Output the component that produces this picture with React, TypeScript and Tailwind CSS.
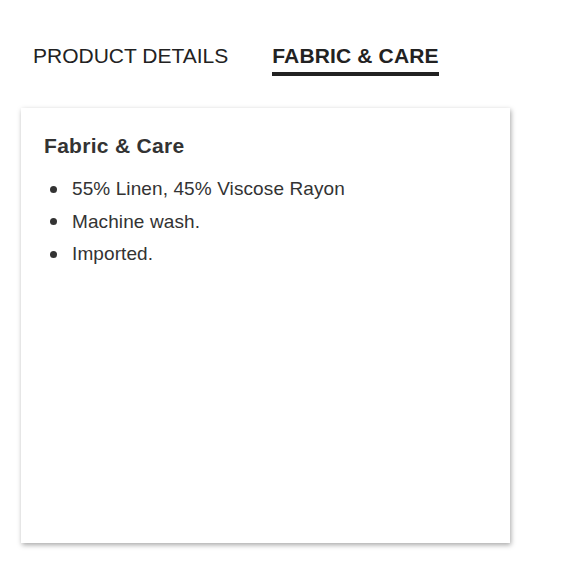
import { useState } from 'react';

type Tab = 'details' | 'care';

const careItems = ['55% Linen, 45% Viscose Rayon', 'Machine wash.', 'Imported.'];

export default function App() {
  const [tab, setTab] = useState<Tab>('care');

  return (
    <div className="min-h-[580px] w-[580px] bg-white pt-[44px] px-[21px] font-['Liberation_Sans',Arial,sans-serif] text-[#222]">
      <div className="flex gap-[44px] pl-[12px]">
        <button
          type="button"
          onClick={() => setTab('details')}
          className={`pb-[4px] border-b-4 text-[21px] leading-[24px] ${
            tab === 'details' ? 'font-bold border-[#222]' : 'font-normal border-transparent'
          }`}
        >
          PRODUCT DETAILS
        </button>
        <button
          type="button"
          onClick={() => setTab('care')}
          className={`pb-[4px] border-b-4 text-[21px] leading-[24px] tracking-[0.15px] ${
            tab === 'care' ? 'font-bold border-[#222]' : 'font-normal border-transparent'
          }`}
        >
          FABRIC &amp; CARE
        </button>
      </div>

      <div className="mt-[32px] w-[489px] h-[435px] bg-white pl-[23px] pt-[26px] shadow-[1px_2px_5px_rgba(0,0,0,0.35)]">
        {tab === 'care' ? (
          <>
            <h2 className="text-[21px] leading-[24px] font-bold tracking-[0.3px] text-[#333]">Fabric &amp; Care</h2>
            <ul className="mt-[15px] text-[19px] leading-[32.5px] tracking-[0.1px] text-[#333]">
              {careItems.map((item) => (
                <li key={item} className="flex items-center">
                  <span className="ml-[6px] mr-[15px] h-[7px] w-[7px] shrink-0 rounded-full bg-[#333]" />
                  {item}
                </li>
              ))}
            </ul>
          </>
        ) : (
          <h2 className="text-[21px] leading-[24px] font-bold text-[#333]">Product Details</h2>
        )}
      </div>
    </div>
  );
}
